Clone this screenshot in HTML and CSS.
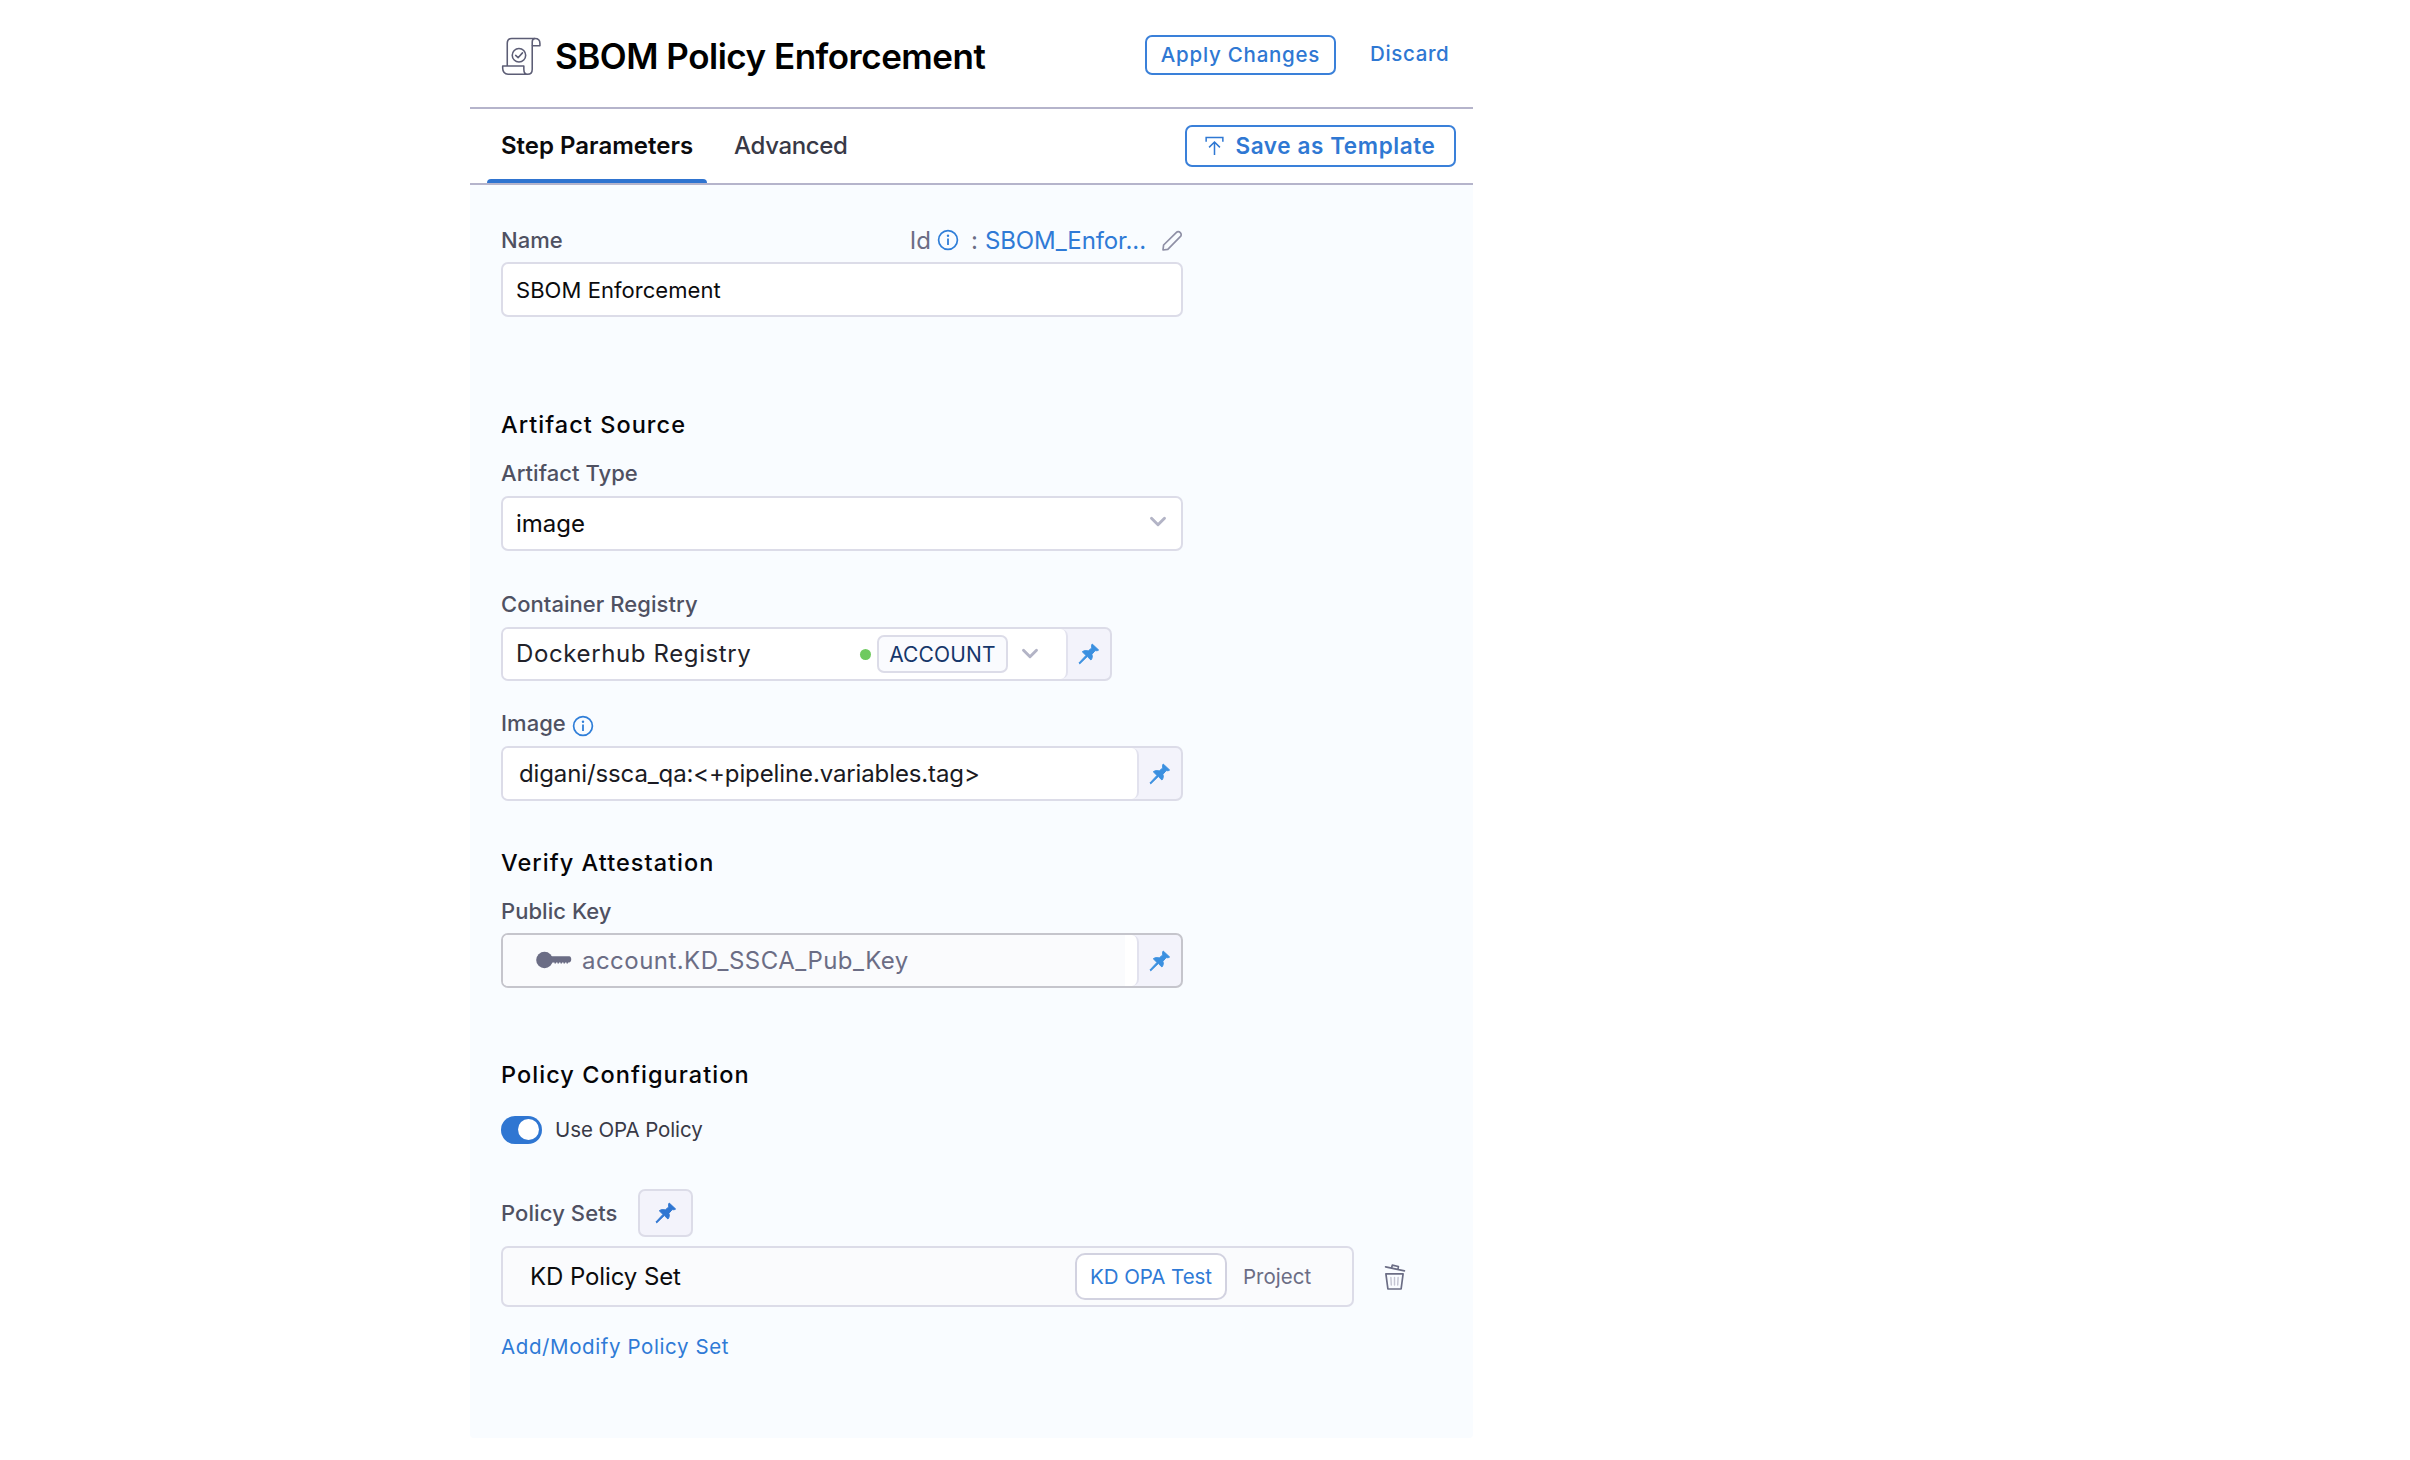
FILE: index.html
```html
<!DOCTYPE html>
<html lang="en">
<head>
<meta charset="utf-8">
<title>SBOM Policy Enforcement</title>
<link rel="stylesheet" href="styles.css">
</head>
<body>
<svg class="defs" width="0" height="0" aria-hidden="true">
  <symbol id="pin" viewBox="0 0 22 22">
    <path d="M14.2 1 L20.6 7 C19.6 7.9 18.2 7.8 17.2 7.6 L13.9 11.3 C14.6 13.3 14.4 15.4 12.9 17 L9.3 13.5 L1.8 20.8 L0.9 20 L8 12.4 L4.3 8.8 C6 7.5 8.2 7.3 10.2 8 L13.8 4.9 C13.4 3.5 13.4 2.1 14.2 1 Z" fill="currentColor" stroke="currentColor" stroke-width="1" stroke-linejoin="round"/>
  </symbol>
  <symbol id="info" viewBox="0 0 22 22">
    <circle cx="11" cy="11" r="9.4" fill="none" stroke="currentColor" stroke-width="1.7"/>
    <path d="M11 9.6V16" stroke="currentColor" stroke-width="1.8"/>
    <circle cx="11" cy="6.7" r="1.2" fill="currentColor"/>
  </symbol>
  <symbol id="chevron" viewBox="0 0 18 12">
    <path d="M2.5 2.2L9 8.8L15.5 2.2" fill="none" stroke="currentColor" stroke-width="2.9" stroke-linecap="round" stroke-linejoin="round"/>
  </symbol>
</svg>
<main class="panel">
  <header class="header">
    <svg class="step-icon" viewBox="0 0 42 40" fill="none" stroke="#5c5d75" stroke-width="1.6" stroke-linejoin="round">
      <path d="M6.4 29.5V6.2C6.4 3.3 8.2 1.6 11 1.6H34.8C38 1.6 39.9 3.6 39.9 6.7V9H32V33C32 36.3 30 38.2 27.3 38.2H7.2C3.8 38.2 1.7 35.6 1.7 32V29.8H23.4V33C23.4 36.5 25 38.2 27.3 38.2"/>
      <path d="M32 9V5.2C32 3 33 1.6 34.8 1.6"/>
      <circle cx="18.4" cy="18.7" r="6.9"/>
      <path d="M15 18.9L17.5 21.2L22 16.3" stroke-linecap="round"/>
    </svg>
    <h1 class="title">SBOM Policy Enforcement</h1>
    <button class="btn apply">Apply Changes</button>
    <button class="discard">Discard</button>
  </header>
  <nav class="tabs">
    <a class="tab active">Step Parameters</a>
    <a class="tab">Advanced</a>
    <button class="btn save">
      <svg class="save-icon" viewBox="0 0 20 22" fill="none" stroke="currentColor" stroke-width="1.6">
        <path d="M1.2 7V2.5H18.8V7M10 21V7.5M4.3 13L10 7.3L15.7 13"/>
      </svg>
      <span>Save as Template</span>
    </button>
  </nav>
  <section class="body">
    <div class="label-row name-row">
      <label class="label">Name</label>
      <div class="id">
        <span>Id</span>
        <svg class="info"><use href="#info"/></svg>
        <span class="colon">:</span>
        <span class="id-value">SBOM_Enfor...</span>
        <svg class="pencil" viewBox="0 0 22 22" fill="none" stroke="#8f90a6" stroke-width="1.7" stroke-linejoin="round">
          <path d="M2 20L2.6 15L15.2 2.6C16.4 1.4 18.1 1.4 19.3 2.6C20.5 3.8 20.5 5.5 19.3 6.7L6.8 19.3Z"/>
        </svg>
      </div>
    </div>
    <div class="field name-field"><span class="value small">SBOM Enforcement</span></div>

    <h2 class="heading artifact-heading">Artifact Source</h2>
    <label class="label type-label">Artifact Type</label>
    <div class="field type-field">
      <span class="value">image</span>
      <svg class="chevron"><use href="#chevron"/></svg>
    </div>

    <label class="label registry-label">Container Registry</label>
    <div class="field registry-field">
      <div class="inner">
        <span class="value wide">Dockerhub Registry</span>
        <i class="dot"></i>
        <span class="scope">ACCOUNT</span>
        <svg class="chevron"><use href="#chevron"/></svg>
      </div>
      <span class="pin-cell"><svg class="pin"><use href="#pin"/></svg></span>
    </div>

    <div class="label-row image-row">
      <label class="label">Image</label>
      <svg class="info"><use href="#info"/></svg>
    </div>
    <div class="field image-field">
      <div class="inner"><span class="value tight">digani/ssca_qa:&lt;+pipeline.variables.tag&gt;</span></div>
      <span class="pin-cell"><svg class="pin"><use href="#pin"/></svg></span>
    </div>

    <h2 class="heading verify-heading">Verify Attestation</h2>
    <label class="label key-label">Public Key</label>
    <div class="field key-field">
      <div class="inner">
        <div class="key-box">
          <svg class="key" viewBox="0 0 36 18" fill="#6b6d85">
            <circle cx="8.5" cy="9" r="8.3"/>
            <path d="M14 5.2H33.2C36 5.2 36 11.5 33 11.5H32V12.6H30.5V11.5H29V12.6H27.5V11.5H26V12.6H24.5V11.5H23V12.6H21.5V11.5H20V12.6H18.5V11.5H14Z"/>
          </svg>
          <span class="value secret">account.KD_SSCA_Pub_Key</span>
        </div>
      </div>
      <span class="pin-cell"><svg class="pin"><use href="#pin"/></svg></span>
    </div>

    <h2 class="heading policy-heading">Policy Configuration</h2>
    <div class="toggle-row">
      <span class="toggle"><i class="knob"></i></span>
      <span class="toggle-label">Use OPA Policy</span>
    </div>

    <div class="sets-row">
      <label class="label">Policy Sets</label>
      <button class="pin-btn"><svg class="pin"><use href="#pin"/></svg></button>
    </div>
    <div class="set-line">
      <div class="set-box">
        <span class="value set-name">KD Policy Set</span>
        <span class="chip">KD OPA Test</span>
        <span class="project">Project</span>
      </div>
      <svg class="trash" viewBox="0 0 22 28" fill="none" stroke="#6b6d85" stroke-width="1.7" stroke-linejoin="round" stroke-linecap="round">
        <path d="M1.6 3.8L20.4 7.8M7.6 4.8L8.3 2.2L14.4 3.5L14 6.2"/>
        <path d="M1.9 10.8H19.1L17.1 26H3.9Z"/>
        <path d="M6.9 14.5L7.3 22M10.5 14.5V22M14.1 14.5L13.7 22" stroke="#c3c4d2" stroke-width="1.4"/>
      </svg>
    </div>
    <a class="add-link">Add/Modify Policy Set</a>
  </section>
</main>
</body>
</html>
```
FILE: styles.css
```css
* { box-sizing: border-box; }

body {
  margin: 0;
  background: #fff;
  font-family: "Inter", sans-serif;
  color: #0b0b0d;
}

.defs { display: block; }

button { font: inherit; background: none; border: 0; padding: 0; }
h1, h2 { margin: 0; }
svg { flex: none; }

.panel {
  width: 1003px;
  height: 1438px;
  margin-left: 470px;
  display: flex;
  flex-direction: column;
}

/* Header */
.header {
  height: 109px;
  border-bottom: 2px solid #b5b4cb;
  display: flex;
  align-items: flex-start;
  padding-left: 31px;
}

.step-icon { width: 41px; height: 39px; margin-top: 37px; }

.title {
  margin: 36px 0 0 13px;
  width: 590px;
  line-height: 40px;
  font-size: 35px;
  font-weight: 600;
  letter-spacing: -.5px;
  color: #000;
}

.btn {
  border: 2px solid #3a80d9;
  border-radius: 7px;
  color: #2f78d3;
  font-weight: 600;
  display: flex;
  align-items: center;
  justify-content: center;
  white-space: nowrap;
}

.apply {
  width: 191px;
  height: 40px;
  margin-top: 35px;
  padding-bottom: 2px;
  font-size: 20.5px;
  font-weight: 500;
  letter-spacing: .75px;
}

.discard {
  margin: 34px 0 0 34px;
  line-height: 40px;
  font-size: 20.5px;
  font-weight: 500;
  letter-spacing: .65px;
  color: #2f78d3;
}

/* Tabs */
.tabs {
  height: 76px;
  border-bottom: 2px solid #b5b4cb;
  display: flex;
  padding: 0 17px;
}

.tab {
  font-size: 24px;
  font-weight: 500;
  line-height: 74px;
  letter-spacing: -.35px;
  color: #383946;
  margin-left: 27px;
}

.tab.active {
  width: 220px;
  margin-left: 0;
  padding-left: 14px;
  font-weight: 600;
  letter-spacing: 0;
  color: #0b0b0d;
  display: flex;
  flex-direction: column;
}

.tab.active::after {
  content: "";
  height: 4px;
  margin: -4px 0 0 -14px;
  width: 220px;
  border-radius: 4px 4px 0 0;
  background: #2f74d0;
}

.save {
  width: 271px;
  height: 42px;
  margin: 16px 0 0 auto;
  padding-bottom: 1px;
  font-size: 22.5px;
  letter-spacing: .6px;
  gap: 11px;
}

.save-icon { width: 19px; height: 21px; }

/* Form body */
.body {
  flex: 1;
  background: #f9fcff;
  border-radius: 0 0 4px 4px;
  padding: 41px 0 0 31px;
  display: flex;
  flex-direction: column;
  align-items: flex-start;
}

.label {
  font-size: 22px;
  font-weight: 500;
  line-height: 28px;
  letter-spacing: .05px;
  color: #4f5162;
}

.label-row { display: flex; align-items: center; height: 28px; }
.name-row { width: 682px; justify-content: space-between; }

.id {
  display: flex;
  align-items: center;
  font-size: 24px;
  line-height: 28px;
  color: #6b6d85;
  padding-top: 2px;
}

.info { width: 22px; height: 22px; color: #2f7ed8; }
.id .info { margin: -3px 0 0 6px; }
.colon { margin-left: 12px; width: 14px; }
.id-value { color: #2f7ad6; letter-spacing: -.1px; }
.pencil { width: 22px; height: 22px; margin-left: 15px; }

.field {
  width: 682px;
  height: 55px;
  border: 2px solid #dcdce8;
  border-radius: 7px;
  background: #fff;
  display: flex;
  align-items: center;
  overflow: hidden;
  color: #0b0b0d;
}

.value { font-size: 24px; line-height: 32px; white-space: nowrap; }
.name-field, .type-field { padding-left: 13px; }
.name-field { margin-top: 8px; }
.small { font-size: 22px; letter-spacing: .05px; }

.chevron { width: 18px; height: 12px; color: #b3b4c6; }
.type-field .chevron { margin: -3px 14px 0 auto; }

.heading {
  font-size: 23.5px;
  font-weight: 500;
  line-height: 32px;
  letter-spacing: 1.05px;
  color: #050508;
}

.artifact-heading { margin-top: 92px; }
.type-label { margin-top: 18px; }
.type-field { margin-top: 9px; }
.registry-label { margin-top: 39px; }

.registry-field { margin-top: 9px; width: 611px; height: 54px; }
.field:has(.pin-cell) { background: #f3f3fb; }

.inner {
  flex: 1;
  height: 100%;
  display: flex;
  align-items: center;
  background: #fff;
  border-right: 2px solid #e2e2ee;
  border-radius: 0 7px 7px 0;
}

.registry-field .inner { padding-left: 13px; }
.wide { letter-spacing: .62px; width: 344px; color: #22222a; }
.dot { width: 11px; height: 11px; border-radius: 50%; background: #6fca5f; flex: none; }

.scope {
  width: 131px;
  height: 38px;
  margin: 0 13px 0 6px;
  border: 2px solid #dcdce8;
  border-radius: 7px;
  background: #fafbfe;
  display: flex;
  align-items: center;
  justify-content: center;
  font-size: 21px;
  font-weight: 400;
  letter-spacing: .15px;
  color: #16376a;
}

.pin-cell {
  width: 42px;
  display: flex;
  justify-content: center;
}

.pin { width: 22px; height: 22px; color: #3b90e0; }

.image-row { margin-top: 28px; }
.image-row .info { margin: 6px 0 0 6px; }
.image-field { margin-top: 9px; }
.image-field .inner { padding-left: 16px; }
.tight { letter-spacing: -.12px; color: #1a1a22; }

.verify-heading { margin-top: 46px; }
.key-label { margin-top: 18px; }
.key-field { margin-top: 8px; border-color: #c5c5cc; }
.key-field .inner { padding-right: 12px; }

.key-box {
  flex: 1;
  height: 100%;
  background: #fafbfd;
  display: flex;
  align-items: center;
  padding-left: 33px;
}

.key { width: 36px; height: 18px; margin-top: -2px; }
.secret { margin-left: 10px; letter-spacing: .46px; color: #6b6d85; }

.policy-heading { margin-top: 71px; }

.toggle-row { margin-top: 24px; height: 29px; display: flex; align-items: center; }

.toggle {
  width: 41px;
  height: 28px;
  border-radius: 14px;
  background: #2f76d2;
  display: flex;
  align-items: center;
  justify-content: flex-end;
  padding-right: 3px;
}

.knob { width: 21px; height: 21px; border-radius: 50%; background: #fff; }
.toggle-label { margin-left: 13px; font-size: 20.5px; color: #383946; letter-spacing: -.1px; }

.sets-row { margin-top: 45px; height: 48px; display: flex; align-items: center; }
.sets-row .label { width: 137px; letter-spacing: .1px; }

.pin-btn {
  width: 55px;
  height: 48px;
  border: 2px solid #dcdce8;
  border-radius: 7px;
  background: #f3f3fb;
  display: flex;
  align-items: center;
  justify-content: center;
}

.pin-btn .pin { color: #2f76d2; }

.set-line { margin-top: 9px; display: flex; align-items: center; }

.set-box {
  width: 853px;
  height: 61px;
  border: 2px solid #dcdce8;
  border-radius: 7px;
  background: #fafbfd;
  display: flex;
  align-items: center;
  padding-left: 27px;
}

.set-name { width: 545px; letter-spacing: -.1px; }

.chip {
  width: 152px;
  height: 47px;
  border: 2px solid #d2d2e0;
  border-radius: 10px;
  background: #fff;
  display: flex;
  align-items: center;
  justify-content: center;
  padding-bottom: 1px;
  font-size: 20.5px;
  font-weight: 400;
  letter-spacing: -.05px;
  color: #2f7ad6;
}

.project { margin: -1px 0 0 16px; font-size: 20.5px; font-weight: 400; color: #6b6d85; }
.trash { width: 22px; height: 28px; margin-left: 30px; }

.add-link {
  margin-top: 26px;
  font-size: 20.5px;
  line-height: 28px;
  letter-spacing: .6px;
  color: #2f7ad6;
}
```
